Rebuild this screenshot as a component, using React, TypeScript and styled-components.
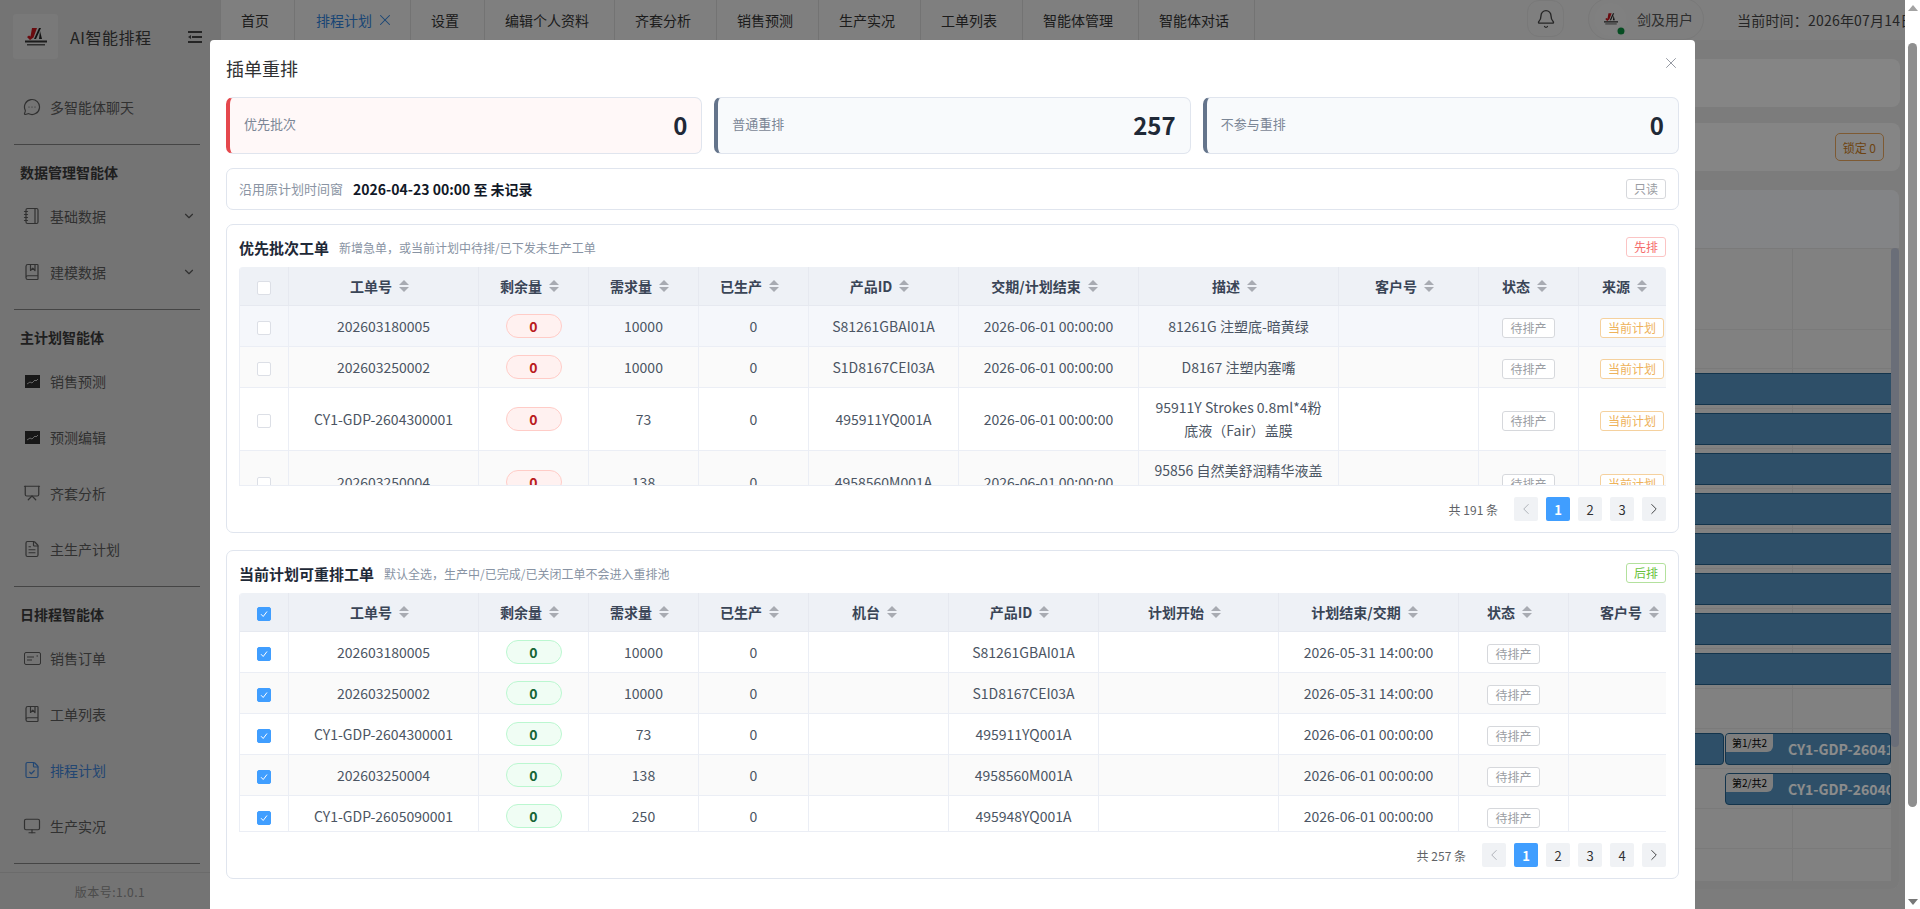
import * as React from 'react'
import styled, { createGlobalStyle } from 'styled-components'
import {
  Bell,
  BookMarked,
  ChevronDown,
  ChevronLeft,
  ChevronRight,
  FileCheck,
  FileText,
  MessageCircleMore,
  Monitor,
  Notebook,
  Presentation,
  X,
} from 'lucide-react'

const GlobalStyle = createGlobalStyle`
  html, body {
    margin: 0;
    padding: 0;
    height: 100%;
    overflow: hidden;
  }
  body {
    font-family: "Noto Sans CJK SC", "Noto Sans", sans-serif;
    font-size: 14px;
    color: #303133;
  }
  * {
    box-sizing: border-box;
  }
`

const Page = styled.div`
  display: flex;
  width: 1920px;
  height: 909px;
  overflow: hidden;
`
const Viewport = styled.div`
  position: relative;
  display: flex;
  flex: 1;
  min-width: 0;
  overflow: hidden;
`

/* window scrollbar */
const WindowBar = styled.div`
  display: flex;
  flex-direction: column;
  align-items: center;
  flex: none;
  width: 15px;
  background: #fff;
`
const BarArrow = styled.div<{ $down?: boolean }>`
  flex: none;
  width: 0;
  height: 0;
  margin-top: ${p => (p.$down ? '92px' : '5px')};
  border-left: 5px solid transparent;
  border-right: 5px solid transparent;
  ${p =>
    p.$down ? 'border-top: 6px solid #777;' : 'border-bottom: 6px solid #a3a3a3;'}
`
const BarThumb = styled.div`
  flex: none;
  width: 9px;
  height: 764px;
  margin-top: 32px;
  border-radius: 5px;
  background: #8f8f8f;
`

/* sidebar */
const Sidebar = styled.aside`
  display: flex;
  flex-direction: column;
  flex: none;
  width: 220px;
  height: 909px;
  overflow: hidden;
  background: #d3d3d3;
  color: #555;
`
const Brand = styled.div`
  display: flex;
  align-items: center;
  flex: none;
  height: 80px;
  padding: 0 18px 7px 13px;
`
const LogoBox = styled.div`
  display: flex;
  align-items: center;
  justify-content: center;
  flex: none;
  width: 45px;
  height: 45px;
  border-radius: 3px;
  background: #dcdcdc;
`
const BrandName = styled.div`
  flex: 1;
  margin-left: 12px;
  font-size: 16px;
  letter-spacing: 0.5px;
  color: #3c3c3c;
`
const CollapseBtn = styled.div`
  display: flex;
  color: #444;
`
const NavItem = styled.div<{ $active?: boolean }>`
  display: flex;
  align-items: center;
  flex: none;
  height: 56px;
  padding: 0 24px 2px;
  gap: 10px;
  color: ${p => (p.$active ? '#3f80d0' : '#595959')};
`
const NavIcon = styled.span`
  display: flex;
  align-items: center;
  justify-content: center;
  flex: none;
  width: 16px;
  height: 18px;
  color: inherit;
  & > svg {
    flex: none;
  }
`
const NavLabel = styled.span`
  flex: 1;
  white-space: nowrap;
`
const Rule = styled.div`
  flex: none;
  height: 1px;
  margin: 8px 20px 12px 14px;
  background: #7f7f7f;
`
const GroupTitle = styled.div`
  flex: none;
  height: 32px;
  padding-left: 20px;
  line-height: 30px;
  font-weight: 700;
  color: #3a3a3a;
`
const VersionBar = styled.div`
  flex: none;
  margin-top: -4px;
  height: 38px;
  border-top: 1px solid #c3c3c3;
  text-align: center;
  line-height: 38px;
  font-size: 12px;
  letter-spacing: 0.5px;
  color: #8a8a8a;
`

/* page behind the dialog */
const Main = styled.main`
  display: flex;
  flex-direction: column;
  flex: 1;
  min-width: 0;
  background: #e2e2e2;
`
const TopBar = styled.header`
  display: flex;
  align-items: flex-start;
  flex: none;
  height: 40px;
  overflow: hidden;
  background: #e7e7e7;
  white-space: nowrap;
`
const Tab = styled.div<{ $active?: boolean }>`
  display: flex;
  align-items: center;
  flex: none;
  gap: 8px;
  height: 40px;
  padding: ${p => (p.$active ? '0 21px' : '0 25px 0 20px')};
  border-right: 1px solid #d2d2d2;
  color: ${p => (p.$active ? '#2f7fd6' : '#333')};
  &:first-child {
    border-left: 1px solid #d2d2d2;
  }
`
const TabClose = styled.span`
  display: flex;
  align-items: center;
  justify-content: center;
  flex: none;
  width: 9px;
  height: 9px;
  & > svg {
    flex: none;
  }
`
const HeaderRight = styled.div`
  display: flex;
  align-items: center;
  margin-left: auto;
  flex: none;
  width: 378px;
`
const BellBtn = styled.div`
  display: flex;
  align-items: center;
  justify-content: center;
  flex: none;
  width: 37px;
  height: 37px;
  margin-top: -3px;
  border: 1px solid #dcdcdc;
  border-radius: 12px;
  color: #444;
`
const UserPill = styled.div`
  display: flex;
  align-items: center;
  flex: none;
  width: 116px;
  height: 42px;
  margin: -2px 0 0 24px;
  padding-left: 5px;
  border: 1px solid #dcdcdc;
  border-radius: 21px;
  color: #555;
`
const Avatar = styled.div`
  position: relative;
  display: flex;
  align-items: center;
  justify-content: center;
  flex: none;
  width: 33px;
  height: 33px;
  margin-right: 10px;
  border-radius: 50%;
  background: #e9e9e9;
`
const OnlineDot = styled.span`
  position: absolute;
  right: -1px;
  bottom: -2px;
  width: 10px;
  height: 10px;
  border: 2px solid #e7e7e7;
  border-radius: 50%;
  background: #0a8a3c;
  box-sizing: content-box;
  transform: scale(0.7);
`
const ClockText = styled.div`
  flex: none;
  margin-left: 33px;
  color: #444;
  letter-spacing: 0.2px;
`
const Content = styled.div`
  display: flex;
  flex-direction: column;
  flex: 1;
  min-height: 0;
  padding: 19px 5px 0 0;
`
const InfoPanel = styled.div`
  display: flex;
  align-items: center;
  justify-content: flex-end;
  flex: none;
  height: 48px;
  margin-bottom: 16px;
  padding-right: 16px;
  border-radius: 8px;
  background: #f3f3f3;
`
const LockTag = styled.div`
  display: flex;
  align-items: center;
  height: 28px;
  padding: 0 7px;
  border: 1px solid #e6a55e;
  border-radius: 5px;
  font-size: 12px;
  color: #c87b22;
`
const Gantt = styled.div`
  display: flex;
  flex-direction: column;
  flex: none;
  height: 699px;
  margin-top: 3px;
  margin-right: 1px;
  border-radius: 8px;
  overflow: hidden;
  background: #ebebeb;
`
const GanttHead = styled.div`
  flex: none;
  height: 58px;
  background: linear-gradient(90deg, #eceff3, #eff1f4);
`
const GanttBody = styled.div`
  display: flex;
  flex: none;
  height: 633px;
`
const GanttCanvas = styled.div`
  flex: 1;
  min-width: 0;
  overflow: hidden;
  background: linear-gradient(#dcdcdc, #dcdcdc) no-repeat right 98px top / 1px 100%;
`
const GanttRow = styled.div`
  display: flex;
  justify-content: flex-end;
  gap: 1px;
  height: 40px;
  padding: 4px 0 3px;
  border-top: 1px solid #dedede;
`
const GanttHeadRow = styled.div`
  height: 120px;
  border-top: 1px solid #dedede;
  background: linear-gradient(#dedede, #dedede) no-repeat left 80px / 100% 1px;
`
const Bar = styled.div<{ $w?: number; $open?: boolean }>`
  display: flex;
  align-items: flex-start;
  flex: ${p => (p.$w ? 'none' : '1')};
  width: ${p => (p.$w ? `${p.$w}px` : 'auto')};
  height: 32px;
  overflow: hidden;
  border: 1px solid #235f8a;
  border-radius: ${p => (p.$open ? '0' : '4px')};
  ${p => (p.$open ? 'border-left: none; border-right: none;' : '')}
  background: #5591bd;
  white-space: nowrap;
`
const BarTag = styled.span`
  flex: none;
  padding: 0 6px;
  height: 18px;
  line-height: 18px;
  font-size: 10px;
  color: #000;
  background: #e6e6e6;
  border-bottom-right-radius: 6px;
`
const BarText = styled.span`
  margin-left: 15px;
  align-self: center;
  font-weight: 700;
  color: #fff;
`
const GanttTrack = styled.div`
  flex: none;
  width: 8px;
  background: #dfdfdf;
`
const GanttThumb = styled.div`
  height: 499px;
  border-radius: 4px;
  background: #c2c8da;
`
const GanttFoot = styled.div`
  flex: none;
  height: 8px;
  background: #dfdfdf;
`

/* dialog */
const Overlay = styled.div`
  position: absolute;
  inset: 0;
  display: flex;
  justify-content: center;
  align-items: flex-start;
  padding-top: 40px;
  background: rgba(0, 0, 0, 0.45);
`
const Dialog = styled.div`
  position: relative;
  flex: none;
  width: 1485px;
  min-height: 869px;
  padding: 16px;
  border-radius: 4px 4px 0 0;
  background: #fff;
`
const DialogTitle = styled.div`
  height: 25px;
  margin-bottom: 16px;
  font-size: 18px;
  line-height: 25px;
  color: #303133;
`
const CloseBtn = styled.div`
  position: absolute;
  top: 14px;
  right: 15px;
  display: flex;
  color: #8a8f99;
`
const StatRow = styled.div`
  display: grid;
  grid-template-columns: repeat(3, 1fr);
  gap: 12px;
  margin-bottom: 14px;
`
const StatCard = styled.div<{ $tone: 'red' | 'slate' }>`
  display: flex;
  align-items: center;
  justify-content: space-between;
  height: 57px;
  padding: 0 14px 0 14px;
  border: 1px solid #e0e5ee;
  border-left: 4px solid ${p => (p.$tone === 'red' ? '#e5484d' : '#64748b')};
  border-radius: 7px;
  background: ${p => (p.$tone === 'red' ? '#fff8f8' : '#f8fafc')};
`
const StatLabel = styled.span`
  margin-top: -5px;
  font-size: 13px;
  color: #7b8696;
`
const StatValue = styled.span`
  margin-top: -2px;
  font-size: 24px;
  font-weight: 700;
  line-height: 32px;
  color: #1f2937;
`
const WindowCard = styled.div`
  display: flex;
  align-items: center;
  height: 42px;
  margin-bottom: 14px;
  padding: 0 12px 0 12px;
  border: 1px solid #e0e5ee;
  border-radius: 7px;
`
const WindowLabel = styled.span`
  margin-top: -1px;
  font-size: 13px;
  color: #8a94a3;
`
const WindowValue = styled.span`
  flex: 1;
  margin: -1px 0 0 10px;
  font-weight: 700;
  color: #111827;
`
const toneColors = {
  gray: { border: '#d6d8dc', color: '#9a9da3' },
  red: { border: '#fbc4c4', color: '#f56c6c' },
  green: { border: '#b3e19d', color: '#67c23a' },
  orange: { border: '#f5d19e', color: '#eeb25b' },
}
type Tone = keyof typeof toneColors

const Tag = styled.span<{ $tone: Tone }>`
  display: inline-flex;
  align-items: center;
  justify-content: center;
  flex: none;
  height: 20px;
  padding: 0 7px;
  border: 1px solid ${p => toneColors[p.$tone].border};
  border-radius: 3px;
  background: #fff;
  font-size: 12px;
  line-height: 18px;
  color: ${p => toneColors[p.$tone].color};
`
const CellTag = styled(Tag)`
  vertical-align: top;
  margin-top: 3px;
`
const SourceTag = styled(CellTag)`
  margin-left: 7px;
`
const Section = styled.section`
  margin-bottom: 17px;
  padding: 12px 12px 11px 12px;
  border: 1px solid #e0e5ee;
  border-radius: 7px;
`
const SectionHead = styled.div`
  display: flex;
  align-items: center;
  height: 20px;
  margin-bottom: 10px;
`
const SectionTitle = styled.span`
  font-size: 15px;
  font-weight: 700;
  color: #1f2937;
`
const SectionSub = styled.span`
  flex: 1;
  margin-left: 10px;
  font-size: 12px;
  color: #8893a3;
`
const TableClip = styled.div<{ $h: number }>`
  height: ${p => p.$h}px;
  overflow: hidden;
  border-bottom: 1px solid #ebeef5;
  border-left: 1px solid #ebeef5;
  border-radius: 4px 4px 0 0;
`
const Table = styled.table<{ $w: number }>`
  width: ${p => p.$w}px;
  table-layout: fixed;
  border-collapse: separate;
  border-spacing: 0;
`
const Col = styled.col<{ $w: number }>`
  width: ${p => p.$w}px;
`
const Th = styled.th`
  height: 39px;
  padding: 0;
  border-right: 1px solid #e6e9f0;
  border-bottom: 1px solid #e6e9f0;
  background: #eef1f6;
  font-weight: 600;
  color: #3a4556;
`
const ThInner = styled.div`
  display: flex;
  align-items: center;
  justify-content: center;
  gap: 7px;
  padding-right: 8px;
`
const Sort = styled.span`
  display: inline-flex;
  flex-direction: column;
  gap: 2px;
`
const Caret = styled.i<{ $down?: boolean }>`
  display: block;
  width: 0;
  height: 0;
  border-left: 5px solid transparent;
  border-right: 5px solid transparent;
  ${p =>
    p.$down ? 'border-top: 5px solid #a8abb2;' : 'border-bottom: 5px solid #a8abb2;'}
`
const Tr = styled.tr<{ $bg: string }>`
  background: ${p => p.$bg};
`
const Td = styled.td`
  height: 41px;
  padding: 8px 12px;
  border-right: 1px solid #ebeef5;
  border-bottom: 1px solid #ebeef5;
  text-align: center;
  line-height: 23px;
  color: #4b5563;
`
const CheckBox = styled.span<{ $on?: boolean }>`
  display: inline-flex;
  align-items: center;
  justify-content: center;
  width: 14px;
  height: 14px;
  border: 1px solid ${p => (p.$on ? '#409eff' : '#dcdfe6')};
  border-radius: 2px;
  background: ${p => (p.$on ? '#409eff' : '#fff')};
  vertical-align: middle;
`
const Pill = styled.span<{ $tone: 'red' | 'green' }>`
  display: inline-block;
  width: 56px;
  height: 24px;
  border: 1px solid ${p => (p.$tone === 'red' ? '#ffccc7' : '#bbf7d0')};
  border-radius: 12px;
  background: ${p => (p.$tone === 'red' ? '#fff1f0' : '#f0fdf4')};
  font-weight: 700;
  line-height: 22px;
  color: ${p => (p.$tone === 'red' ? '#b91c1c' : '#166534')};
  vertical-align: top;
`
const Pager = styled.div`
  display: flex;
  align-items: center;
  justify-content: flex-end;
  gap: 8px;
  height: 24px;
  margin-top: 11px;
`
const PagerTotal = styled.span`
  margin-right: 8px;
  font-size: 12px;
  color: #606266;
`
const PageBtn = styled.span<{ $active?: boolean; $off?: boolean }>`
  display: flex;
  align-items: center;
  justify-content: center;
  width: 24px;
  height: 24px;
  border-radius: 2px;
  background: ${p => (p.$active ? '#409eff' : '#f0f2f5')};
  font-size: 13px;
  font-weight: ${p => (p.$active ? 700 : 400)};
  color: ${p => (p.$active ? '#fff' : p.$off ? '#a8abb2' : '#303133')};
`

const LogoMark = ({ small }: { small?: boolean }) => (
  <svg width={small ? 14 : 22} height={small ? 12 : 18} viewBox="0 0 22 18">
    <path d="M7 0h5L8.500 9.500 5 12l-3-3 2-1.500 1.500 1z" fill="#c0141c" />
    <path d="M14 0h2L11 11H9z" fill="#222" />
    <path d="M15 3l2 8h-3z" fill="#222" />
    <rect x="0" y="12.500" width="22" height="2" fill="#333" />
    <rect x="2" y="16" width="18" height="1.500" fill="#555" />
  </svg>
)

const CollapseIcon = () => (
  <svg width="14" height="12" viewBox="0 0 14 12" fill="currentColor">
    <rect x="0" y="0" width="14" height="2" />
    <rect x="4" y="5" width="10" height="2" />
    <rect x="0" y="10" width="14" height="2" />
    <path d="M3 4v4L0 6z" />
  </svg>
)

const ChartIcon = () => (
  <svg width="15" height="13" viewBox="0 0 15 13">
    <rect width="15" height="13" fill="#2c2c2c" />
    <path d="M2 9l3-2 2 1 3-3 1 1 2-2" fill="none" stroke="#bbb" strokeWidth="1" />
  </svg>
)

const OrderIcon = () => (
  <svg width="17" height="13" viewBox="0 0 17 13" fill="none" stroke="currentColor">
    <rect x="0.500" y="0.500" width="16" height="12" rx="1.500" />
    <path d="M3 5h7M3 8h5M12.500 4h1.500" />
  </svg>
)

const navGroups = [
  {
    title: '数据管理智能体',
    items: [
      { label: '基础数据', icon: <Notebook size={18} strokeWidth={1.6} />, more: true },
      { label: '建模数据', icon: <BookMarked size={18} strokeWidth={1.6} />, more: true },
    ],
  },
  {
    title: '主计划智能体',
    items: [
      { label: '销售预测', icon: <ChartIcon /> },
      { label: '预测编辑', icon: <ChartIcon /> },
      { label: '齐套分析', icon: <Presentation size={18} strokeWidth={1.6} /> },
      { label: '主生产计划', icon: <FileText size={18} strokeWidth={1.6} /> },
    ],
  },
  {
    title: '日排程智能体',
    items: [
      { label: '销售订单', icon: <OrderIcon /> },
      { label: '工单列表', icon: <BookMarked size={18} strokeWidth={1.6} /> },
      { label: '排程计划', icon: <FileCheck size={18} strokeWidth={1.6} />, active: true },
      { label: '生产实况', icon: <Monitor size={18} strokeWidth={1.6} /> },
    ],
  },
]

const tabs = [
  '首页',
  '排程计划',
  '设置',
  '编辑个人资料',
  '齐套分析',
  '销售预测',
  '生产实况',
  '工单列表',
  '智能体管理',
  '智能体对话',
]

type Order = { no: string; demand: string; product: string; desc: string; due: string }

const orders: Order[] = [
  { no: '202603180005', demand: '10000', product: 'S81261GBAI01A', desc: '81261G 注塑底-暗黄绿', due: '2026-05-31 14:00:00' },
  { no: '202603250002', demand: '10000', product: 'S1D8167CEI03A', desc: 'D8167 注塑内塞嘴', due: '2026-05-31 14:00:00' },
  { no: 'CY1-GDP-2604300001', demand: '73', product: '495911YQ001A', desc: '95911Y Strokes 0.8ml*4粉底液（Fair）盖膜', due: '2026-06-01 00:00:00' },
  { no: '202603250004', demand: '138', product: '4958560M001A', desc: '95856 自然美舒润精华液盖膜', due: '2026-06-01 00:00:00' },
  { no: 'CY1-GDP-2605090001', demand: '250', product: '495948YQ001A', desc: '', due: '2026-06-01 00:00:00' },
]

type Column = { label: string; w: number; render: (o: Order) => React.ReactNode }

const priorityColumns: Column[] = [
  { label: '工单号', w: 190, render: o => o.no },
  { label: '剩余量', w: 110, render: () => <Pill $tone="red">0</Pill> },
  { label: '需求量', w: 110, render: o => o.demand },
  { label: '已生产', w: 110, render: () => '0' },
  { label: '产品ID', w: 150, render: o => o.product },
  { label: '交期/计划结束', w: 180, render: () => '2026-06-01 00:00:00' },
  { label: '描述', w: 200, render: o => o.desc },
  { label: '客户号', w: 140, render: () => '' },
  { label: '状态', w: 100, render: () => <CellTag $tone="gray">待排产</CellTag> },
  { label: '来源', w: 100, render: () => <SourceTag $tone="orange">当前计划</SourceTag> },
]

const planColumns: Column[] = [
  { label: '工单号', w: 190, render: o => o.no },
  { label: '剩余量', w: 110, render: () => <Pill $tone="green">0</Pill> },
  { label: '需求量', w: 110, render: o => o.demand },
  { label: '已生产', w: 110, render: () => '0' },
  { label: '机台', w: 140, render: () => '' },
  { label: '产品ID', w: 150, render: o => o.product },
  { label: '计划开始', w: 180, render: () => '' },
  { label: '计划结束/交期', w: 180, render: o => o.due },
  { label: '状态', w: 110, render: () => <CellTag $tone="gray">待排产</CellTag> },
  { label: '客户号', w: 130, render: () => '' },
]

const CheckMark = () => (
  <svg width="10" height="10" viewBox="0 0 10 10" fill="none" stroke="#fff" strokeWidth="1">
    <path d="M2 5.200l2.200 2.300L8 2.500" />
  </svg>
)

const OrderTable = ({
  columns,
  rows,
  checked,
  height,
  hoverFirst,
}: {
  columns: Column[]
  rows: Order[]
  checked?: boolean
  height: number
  hoverFirst?: boolean
}) => {
  const total = columns.reduce((sum, c) => sum + c.w, 49)
  return (
    <TableClip $h={height}>
      <Table $w={total}>
        <colgroup>
          <Col $w={49} />
          {columns.map(c => (
            <Col key={c.label} $w={c.w} />
          ))}
        </colgroup>
        <thead>
          <tr>
            <Th>
              <CheckBox $on={checked}>{checked && <CheckMark />}</CheckBox>
            </Th>
            {columns.map(c => (
              <Th key={c.label}>
                <ThInner>
                  {c.label}
                  <Sort>
                    <Caret />
                    <Caret $down />
                  </Sort>
                </ThInner>
              </Th>
            ))}
          </tr>
        </thead>
        <tbody>
          {rows.map((o, i) => (
            <Tr
              key={o.no}
              $bg={hoverFirst && i === 0 ? '#f5f7fb' : i % 2 === 1 ? '#fafafa' : '#fff'}
            >
              <Td>
                <CheckBox $on={checked}>{checked && <CheckMark />}</CheckBox>
              </Td>
              {columns.map(c => (
                <Td key={c.label}>{c.render(o)}</Td>
              ))}
            </Tr>
          ))}
        </tbody>
      </Table>
    </TableClip>
  )
}

const Pagination = ({ total, pages }: { total: number; pages: number }) => (
  <Pager>
    <PagerTotal>共 {total} 条</PagerTotal>
    <PageBtn $off>
      <ChevronLeft size={18} strokeWidth={1.2} />
    </PageBtn>
    {Array.from({ length: pages }, (_, i) => (
      <PageBtn key={i} $active={i === 0}>
        {i + 1}
      </PageBtn>
    ))}
    <PageBtn>
      <ChevronRight size={18} strokeWidth={1.2} />
    </PageBtn>
  </Pager>
)

const App = () => {
  return (
    <Page>
      <GlobalStyle />
      <Viewport>
        <Sidebar>
          <Brand>
            <LogoBox>
              <LogoMark />
            </LogoBox>
            <BrandName>AI智能排程</BrandName>
            <CollapseBtn>
              <CollapseIcon />
            </CollapseBtn>
          </Brand>
          <NavItem>
            <NavIcon>
              <MessageCircleMore size={18} strokeWidth={1.6} />
            </NavIcon>
            <NavLabel>多智能体聊天</NavLabel>
          </NavItem>
          {navGroups.map(group => (
            <React.Fragment key={group.title}>
              <Rule />
              <GroupTitle>{group.title}</GroupTitle>
              {group.items.map(item => (
                <NavItem key={item.label} $active={item.active}>
                  <NavIcon>{item.icon}</NavIcon>
                  <NavLabel>{item.label}</NavLabel>
                  {item.more && <ChevronDown size={14} />}
                </NavItem>
              ))}
            </React.Fragment>
          ))}
          <Rule />
          <VersionBar>版本号:1.0.1</VersionBar>
        </Sidebar>

        <Main>
          <TopBar>
            {tabs.map((t, i) => (
              <Tab key={t} $active={i === 1}>
                {t}
                {i === 1 && (
                  <TabClose>
                    <X size={18} strokeWidth={1.4} />
                  </TabClose>
                )}
              </Tab>
            ))}
            <HeaderRight>
              <BellBtn>
                <Bell size={20} strokeWidth={1.6} />
              </BellBtn>
              <UserPill>
                <Avatar>
                  <LogoMark small />
                  <OnlineDot />
                </Avatar>
                剑及用户
              </UserPill>
              <ClockText>当前时间：2026年07月14日 10:25:36</ClockText>
            </HeaderRight>
          </TopBar>
          <Content>
            <InfoPanel />
            <InfoPanel>
              <LockTag>锁定 0</LockTag>
            </InfoPanel>
            <Gantt>
              <GanttHead />
              <GanttBody>
                <GanttCanvas>
                  <GanttHeadRow />
                  {Array.from({ length: 8 }, (_, i) => (
                    <GanttRow key={i}>
                      <Bar $open />
                    </GanttRow>
                  ))}
                  <GanttRow />
                  <GanttRow>
                    <Bar />
                    <Bar $w={166}>
                      <BarTag>第1/共2</BarTag>
                      <BarText>CY1-GDP-2604100001</BarText>
                    </Bar>
                  </GanttRow>
                  <GanttRow>
                    <Bar $w={166}>
                      <BarTag>第2/共2</BarTag>
                      <BarText>CY1-GDP-2604010001</BarText>
                    </Bar>
                  </GanttRow>
                  <GanttRow />
                  <GanttRow />
                </GanttCanvas>
                <GanttTrack>
                  <GanttThumb />
                </GanttTrack>
              </GanttBody>
              <GanttFoot />
            </Gantt>
          </Content>
        </Main>

        <Overlay>
          <Dialog>
            <DialogTitle>插单重排</DialogTitle>
            <CloseBtn>
              <X size={18} strokeWidth={1.2} />
            </CloseBtn>
            <StatRow>
              <StatCard $tone="red">
                <StatLabel>优先批次</StatLabel>
                <StatValue>0</StatValue>
              </StatCard>
              <StatCard $tone="slate">
                <StatLabel>普通重排</StatLabel>
                <StatValue>257</StatValue>
              </StatCard>
              <StatCard $tone="slate">
                <StatLabel>不参与重排</StatLabel>
                <StatValue>0</StatValue>
              </StatCard>
            </StatRow>
            <WindowCard>
              <WindowLabel>沿用原计划时间窗</WindowLabel>
              <WindowValue>2026-04-23 00:00 至 未记录</WindowValue>
              <Tag $tone="gray">只读</Tag>
            </WindowCard>
            <Section>
              <SectionHead>
                <SectionTitle>优先批次工单</SectionTitle>
                <SectionSub>新增急单，或当前计划中待排/已下发未生产工单</SectionSub>
                <Tag $tone="red">先排</Tag>
              </SectionHead>
              <OrderTable
                columns={priorityColumns}
                rows={orders.slice(0, 4)}
                height={219}
                hoverFirst
              />
              <Pagination total={191} pages={3} />
            </Section>
            <Section>
              <SectionHead>
                <SectionTitle>当前计划可重排工单</SectionTitle>
                <SectionSub>默认全选，生产中/已完成/已关闭工单不会进入重排池</SectionSub>
                <Tag $tone="green">后排</Tag>
              </SectionHead>
              <OrderTable columns={planColumns} rows={orders} height={239} checked />
              <Pagination total={257} pages={4} />
            </Section>
          </Dialog>
        </Overlay>
      </Viewport>
      <WindowBar>
        <BarArrow />
        <BarThumb />
        <BarArrow $down />
      </WindowBar>
    </Page>
  )
}

export default App
